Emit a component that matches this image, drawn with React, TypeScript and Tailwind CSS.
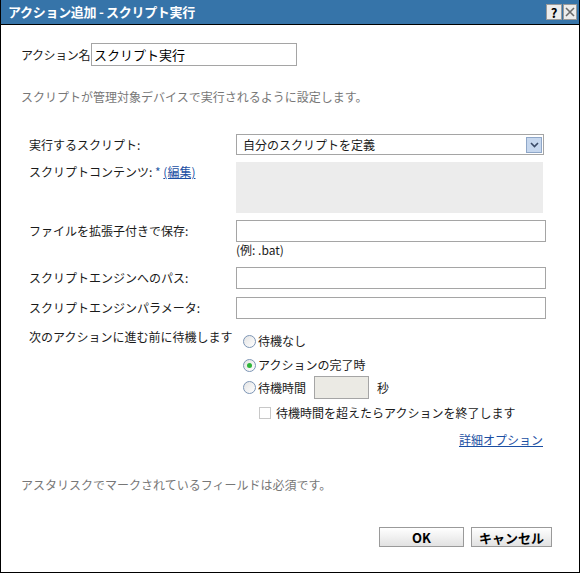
import React, { useState } from 'react'

function Radio({ checked }: { checked: boolean }) {
  return (
    <span className="w-[13px] h-[13px] rounded-full border border-[#7c95b5] bg-gradient-to-br from-[#e4e4e4] to-white flex items-center justify-center shrink-0">
      {checked && <span className="w-[5px] h-[5px] rounded-full bg-[#2fb53a]" />}
    </span>
  )
}

function TextInput({ width = 'w-[310px]' }: { width?: string }) {
  return <div className={`${width} h-[22px] border border-[#a5a5a5] bg-white`} />
}

function App() {
  const [wait] = useState(1)
  const options = ['待機なし', 'アクションの完了時']

  return (
    <div
      className="w-[580px] h-[573px] bg-white border-x border-b border-black flex flex-col text-[12px] text-[#1a1a1a]"
      style={{ fontFamily: '"Noto Sans CJK JP", "Noto Sans", sans-serif' }}
    >
      <div className="h-[25px] bg-[#3674a9] border-b border-black flex items-center justify-between pl-[7px] pr-[2px]">
        <span className="text-white font-bold text-[13px] tracking-[-0.3px] whitespace-pre">アクション追加 - スクリプト実行</span>
        <div className="flex gap-[1px]">
          <span className="w-[16px] h-[16px] bg-[#ececec] border border-[#9a9a9a] flex items-center justify-center text-[13px] font-bold leading-none text-black">?</span>
          <span className="w-[14px] h-[16px] bg-[#ececec] border border-[#9a9a9a] flex items-center justify-center">
            <svg width="10" height="10" viewBox="0 0 10 10">
              <path d="M1 1 L9 9 M9 1 L1 9" stroke="#6b6b6b" strokeWidth="1.6" />
            </svg>
          </span>
        </div>
      </div>

      <div className="flex items-center mt-[18px] ml-[20px]">
        <span className="tracking-[-0.4px]">アクション名</span>
        <div className="w-[206px] h-[23px] border border-[#a5a5a5] flex items-center px-[2px] text-[13px] text-black ml-[1px]">スクリプト実行</div>
      </div>

      <p className="ml-[20px] mt-[22px] text-[#777]">スクリプトが管理対象デバイスで実行されるように設定します。</p>

      <div className="ml-[28px] mt-[28px] flex flex-col">
        <div className="flex items-center h-[21px]">
          <span className="w-[207px]">実行するスクリプト:</span>
          <div className="w-[308px] h-[21px] border border-[#a5a5a5] flex items-center justify-between pl-[6px] pr-[1px]">
            <span>自分のスクリプトを定義</span>
            <span className="w-[16px] h-[16px] bg-[#c6d7ee] border border-[#8fa7c8] flex items-center justify-center">
              <svg width="9" height="6" viewBox="0 0 9 6">
                <path d="M1 1 L4.5 4.5 L8 1" stroke="#3a4a66" strokeWidth="1.6" fill="none" />
              </svg>
            </span>
          </div>
        </div>

        <div className="flex mt-[7px]">
          <span className="w-[207px] pt-[1px]">
            スクリプトコンテンツ: <span className="text-[#2b5ea8]">*</span>{' '}
            <span className="text-[#1b4fa3] underline">(編集)</span>
          </span>
          <div className="w-[307px] h-[51px] bg-[#ececec]" />
        </div>

        <div className="flex items-center mt-[7px]">
          <span className="w-[207px]">ファイルを拡張子付きで保存:</span>
          <TextInput />
        </div>
        <div className="ml-[207px] leading-[14px] mt-[1px]">(例: .bat)</div>

        <div className="flex items-center mt-[10px]">
          <span className="w-[207px]">スクリプトエンジンへのパス:</span>
          <TextInput />
        </div>

        <div className="flex items-center mt-[8px]">
          <span className="w-[207px]">スクリプトエンジンパラメータ:</span>
          <TextInput />
        </div>

        <div className="flex mt-[8px]">
          <span className="w-[214px] pt-[1px]">次のアクションに進む前に待機します</span>
          <div className="flex flex-col">
            {options.map((o, i) => (
              <div key={o} className={`flex items-center gap-[2px] h-[18px] ${i > 0 ? 'mt-[6px]' : 'mt-[5px]'}`}>
                <Radio checked={wait === i} />
                <span>{o}</span>
              </div>
            ))}
            <div className="flex items-center gap-[2px] mt-[2px]">
              <Radio checked={false} />
              <span>待機時間</span>
              <div className="w-[55px] h-[23px] bg-[#ebeae4] border border-[#a5a5a5] ml-[6px]" />
              <span className="ml-[6px]">秒</span>
            </div>
            <div className="flex items-center gap-[5px] ml-[16px] mt-[5px]">
              <span className="w-[12px] h-[12px] border border-[#c8c8c8] bg-white" />
              <span>待機時間を超えたらアクションを終了します</span>
            </div>
          </div>
        </div>

        <div className="flex justify-end w-[514px] mt-[9px]">
          <span className="text-[#1b4fa3] underline">詳細オプション</span>
        </div>
      </div>

      <p className="ml-[20px] mt-[27px] text-[#777]">アスタリスクでマークされているフィールドは必須です。</p>

      <div className="flex justify-end gap-[7px] mr-[27px] mt-[33px]">
        <button className="w-[85px] h-[20px] border border-[#9a9a9a] bg-gradient-to-b from-white to-[#e2e2e2] font-bold text-[13px] leading-none text-black">OK</button>
        <button className="w-[81px] h-[20px] border border-[#9a9a9a] bg-gradient-to-b from-white to-[#e2e2e2] font-bold text-[13px] leading-none text-black">キャンセル</button>
      </div>
    </div>
  )
}

export default App
